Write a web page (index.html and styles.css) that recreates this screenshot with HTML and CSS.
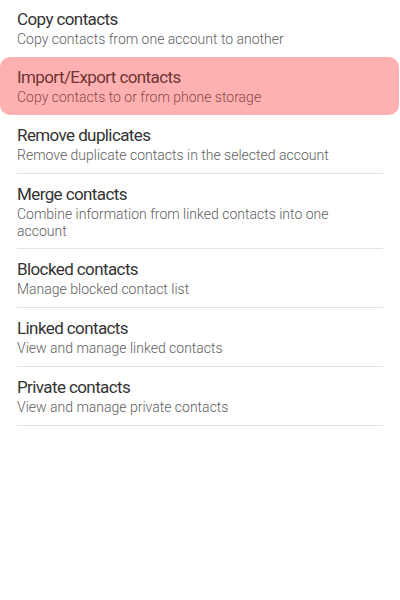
FILE: index.html
```html
<!DOCTYPE html>
<html>
<head>
<meta charset="utf-8">
<link rel="stylesheet" href="styles.css">
</head>
<body>
<div class="list">
  <div class="item first">
    <div class="title">Copy contacts</div>
    <div class="sub">Copy contacts from one account to another</div>
  </div>
  <div class="item active">
    <div class="title">Import/Export contacts</div>
    <div class="sub">Copy contacts to or from phone storage</div>
  </div>
  <div class="item divided">
    <div class="title">Remove duplicates</div>
    <div class="sub">Remove duplicate contacts in the selected account</div>
  </div>
  <div class="item divided tall">
    <div class="title">Merge contacts</div>
    <div class="sub">Combine information from linked contacts into one account</div>
  </div>
  <div class="item divided">
    <div class="title">Blocked contacts</div>
    <div class="sub">Manage blocked contact list</div>
  </div>
  <div class="item divided">
    <div class="title">Linked contacts</div>
    <div class="sub">View and manage linked contacts</div>
  </div>
  <div class="item divided">
    <div class="title">Private contacts</div>
    <div class="sub">View and manage private contacts</div>
  </div>
</div>
</body>
</html>
```

FILE: styles.css
```css
html, body {
  margin: 0;
  padding: 0;
  background: #ffffff;
}
body {
  font-family: Roboto, "Noto Sans", sans-serif;
  width: 400px;
  height: 600px;
  overflow: hidden;
}
.list {
  display: flex;
  flex-direction: column;
}
.item {
  padding: 9px 28px 9px 17px;
}
.item.first {
  margin-top: -1px;
}
.item.divided {
  border-bottom: 1px solid transparent;
  background-image: linear-gradient(#e3e3e3, #e3e3e3);
  background-size: 366px 1px;
  background-position: 17px 100%;
  background-origin: border-box;
  background-clip: border-box;
  background-repeat: no-repeat;
}
.item.tall {
  padding-bottom: 8px;
}
.title {
  font-size: 17px;
  line-height: 22px;
  color: #333333;
  letter-spacing: -0.6px;
}
.sub {
  font-size: 14px;
  line-height: 17px;
  font-weight: 300;
  color: #5e5e5e;
  padding-top: 1px;
}
.active {
  background: #ffb1b1;
  border-radius: 10px;
  margin-right: 1px;
}
.active .title {
  color: #6e3434;
}
.active .sub {
  color: #8a4a4a;
}
```
